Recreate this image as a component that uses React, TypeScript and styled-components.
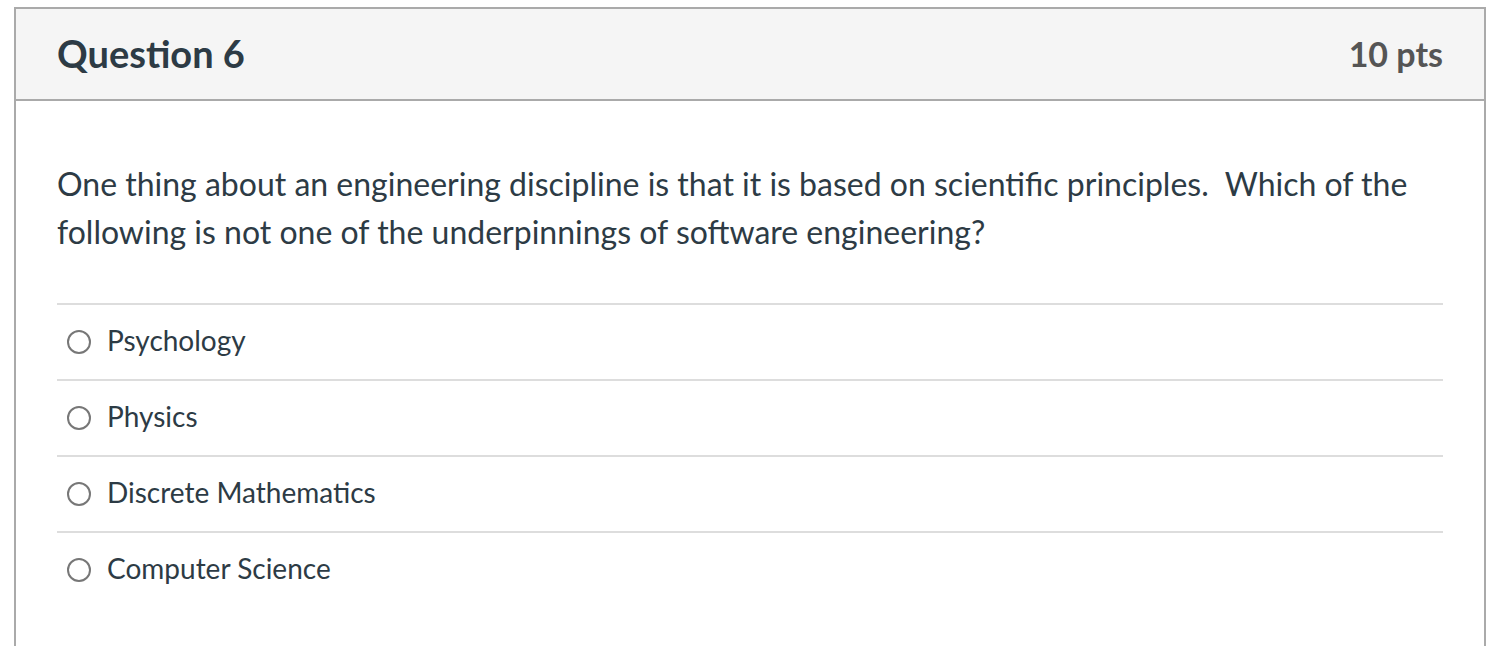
import React from "react";
import styled, { createGlobalStyle } from "styled-components";

const GlobalStyle = createGlobalStyle`
  body {
    margin: 0;
    background: #ffffff;
    font-family: Lato, "Open Sans", sans-serif;
  }
`;

const answers = [
  "Psychology",
  "Physics",
  "Discrete Mathematics",
  "Computer Science",
];

const App = () => {
  return (
    <>
      <GlobalStyle />
      <Page>
        <Card>
          <Header>
            <Title>Question 6</Title>
            <Points>10 pts</Points>
          </Header>
          <Body>
            <QuestionText>
              One thing about an engineering discipline is that it is based on
              scientific principles.&nbsp; Which of the following is not one of
              the underpinnings of software engineering?
            </QuestionText>
            <AnswerList>
              {answers.map((answer) => (
                <AnswerRow key={answer}>
                  <Radio />
                  <AnswerLabel>{answer}</AnswerLabel>
                </AnswerRow>
              ))}
            </AnswerList>
          </Body>
        </Card>
      </Page>
    </>
  );
};

export default App;

const Page = styled.div`
  padding: 7px 16px 0 14px;
  height: 646px;
  box-sizing: border-box;
  overflow: hidden;
`;

const Card = styled.div`
  border: 2px solid #aaaaaa;
  border-bottom: none;
  min-height: 700px;
`;

const Header = styled.div`
  height: 90px;
  display: flex;
  align-items: center;
  justify-content: space-between;
  padding: 0 41px;
  background: #f5f5f5;
  border-bottom: 2px solid #aaaaaa;
`;

const Title = styled.h2`
  margin: 0;
  font-size: 38px;
  font-weight: 700;
  color: #2d3b45;
  padding-bottom: 2px;
`;

const Points = styled.div`
  font-size: 34px;
  font-weight: 700;
  color: #555555;
  padding-bottom: 2px;
`;

const Body = styled.div`
  padding: 59px 41px 0;
`;

const QuestionText = styled.p`
  margin: 0 0 47px;
  font-size: 32px;
  line-height: 48px;
  color: #2d3b45;
`;

const AnswerList = styled.div`
  display: flex;
  flex-direction: column;
`;

const AnswerRow = styled.label`
  display: flex;
  align-items: center;
  height: 74px;
  padding-left: 10px;
  border-top: 2px solid #dddddd;
`;

const Radio = styled.span`
  width: 20px;
  height: 20px;
  border: 2px solid #777777;
  border-radius: 50%;
  margin-right: 16px;
  flex-shrink: 0;
`;

const AnswerLabel = styled.span`
  font-size: 28px;
  color: #2d3b45;
  padding-bottom: 4px;
`;
